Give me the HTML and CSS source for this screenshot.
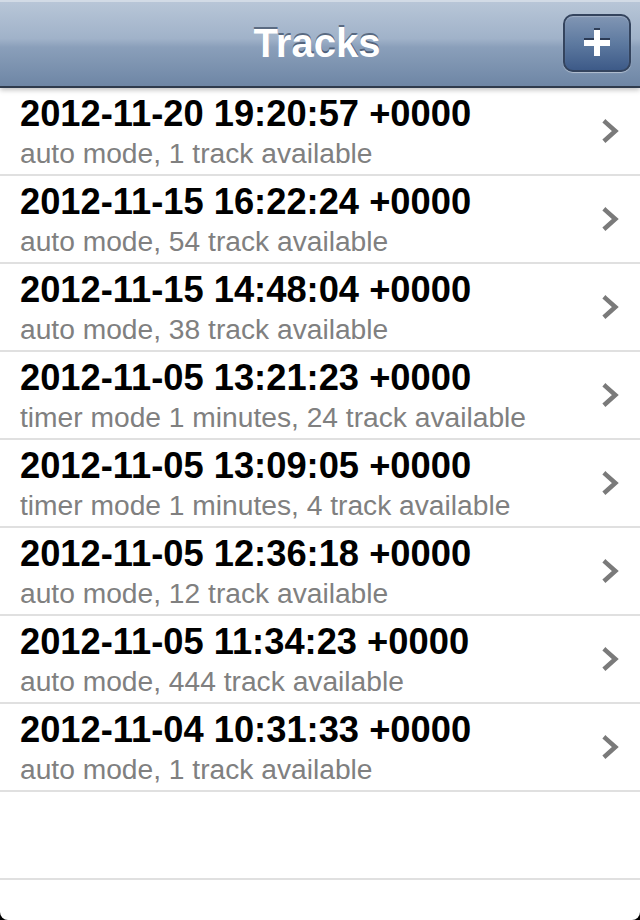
FILE: index.html
```html
<!DOCTYPE html>
<html>
<head>
<meta charset="utf-8">
<link rel="stylesheet" href="styles.css">
</head>
<body>
<div class="screen">
  <header class="navbar">
    <h1 class="title">Tracks</h1>
    <button class="add-btn" aria-label="Add">
      <span class="plus"></span>
    </button>
  </header>
  <ul class="list">
    <li class="row"><div class="text"><div class="main">2012-11-20 19:20:57 +0000</div><div class="sub">auto mode, 1 track available</div></div><svg class="chev" viewBox="0 0 20 24"><path d="M5 4 L14 12 L5 20" /></svg></li>
    <li class="row"><div class="text"><div class="main">2012-11-15 16:22:24 +0000</div><div class="sub">auto mode, 54 track available</div></div><svg class="chev" viewBox="0 0 20 24"><path d="M5 4 L14 12 L5 20" /></svg></li>
    <li class="row"><div class="text"><div class="main">2012-11-15 14:48:04 +0000</div><div class="sub">auto mode, 38 track available</div></div><svg class="chev" viewBox="0 0 20 24"><path d="M5 4 L14 12 L5 20" /></svg></li>
    <li class="row"><div class="text"><div class="main">2012-11-05 13:21:23 +0000</div><div class="sub">timer mode 1 minutes, 24 track available</div></div><svg class="chev" viewBox="0 0 20 24"><path d="M5 4 L14 12 L5 20" /></svg></li>
    <li class="row"><div class="text"><div class="main">2012-11-05 13:09:05 +0000</div><div class="sub">timer mode 1 minutes, 4 track available</div></div><svg class="chev" viewBox="0 0 20 24"><path d="M5 4 L14 12 L5 20" /></svg></li>
    <li class="row"><div class="text"><div class="main">2012-11-05 12:36:18 +0000</div><div class="sub">auto mode, 12 track available</div></div><svg class="chev" viewBox="0 0 20 24"><path d="M5 4 L14 12 L5 20" /></svg></li>
    <li class="row"><div class="text"><div class="main">2012-11-05 11:34:23 +0000</div><div class="sub">auto mode, 444 track available</div></div><svg class="chev" viewBox="0 0 20 24"><path d="M5 4 L14 12 L5 20" /></svg></li>
    <li class="row"><div class="text"><div class="main">2012-11-04 10:31:33 +0000</div><div class="sub">auto mode, 1 track available</div></div><svg class="chev" viewBox="0 0 20 24"><path d="M5 4 L14 12 L5 20" /></svg></li>
    <li class="row empty"></li>
  </ul>
</div>
</body>
</html>
```
FILE: styles.css
```css
html, body {
  margin: 0;
  padding: 0;
  background: #000;
}
.screen {
  width: 640px;
  height: 920px;
  background: #fff;
  border-bottom-left-radius: 8px;
  border-bottom-right-radius: 8px;
  overflow: hidden;
  font-family: "Liberation Sans", Arial, sans-serif;
}
.navbar {
  position: relative;
  z-index: 1;
  height: 86px;
  border-bottom: 2px solid #2f3b4c;
  background: linear-gradient(to bottom, #b9c7d8 0%, #a0b2c9 45%, #8a9fba 55%, #6e86a5 100%);
  box-shadow: 0 2px 5px rgba(0,0,0,0.25), inset 0 2px 0 #d2dbe6;
  display: flex;
  align-items: center;
  justify-content: center;
}
.title {
  margin: 0;
  font-size: 40px;
  font-weight: bold;
  color: #fff;
  text-shadow: 0 -2px 0 rgba(40,55,80,0.6);
  transform: translateX(-3px);
}
.add-btn {
  position: absolute;
  right: 9px;
  top: 14px;
  width: 68px;
  height: 58px;
  padding: 0;
  border: 2px solid #34445e;
  border-radius: 10px;
  background: linear-gradient(to bottom, #8196b4 0%, #5e7aa0 50%, #3d5a88 100%);
  box-shadow: 0 1px 1px rgba(255,255,255,0.45), inset 0 1px 1px rgba(255,255,255,0.25);
  display: flex;
  align-items: center;
  justify-content: center;
}
.plus {
  position: relative;
  width: 26px;
  height: 26px;
}
.plus::before, .plus::after {
  content: "";
  position: absolute;
  background: #fff;
  box-shadow: 0 -2px 0 rgba(20,30,50,0.7);
}
.plus::before {
  left: 0;
  top: 10px;
  width: 26px;
  height: 6px;
}
.plus::after {
  left: 10px;
  top: 0;
  width: 6px;
  height: 26px;
}
.list {
  list-style: none;
  margin: 0;
  padding: 0;
}
.row {
  height: 86px;
  border-bottom: 2px solid #e0e0e0;
  display: flex;
  align-items: center;
  padding: 0 20px;
}
.text {
  flex: 1;
  padding-top: 2px;
}
.main {
  font-size: 36.3px;
  font-weight: bold;
  color: #000;
  line-height: 40px;
}
.sub {
  font-size: 28.2px;
  color: #808080;
  line-height: 34px;
  margin-top: 2px;
}
.chev {
  width: 22px;
  height: 26px;
  margin-right: -2px;
}
.chev path {
  fill: none;
  stroke: #7a7a7a;
  stroke-width: 4.2;
  stroke-linecap: square;
  stroke-linejoin: miter;
}
```
